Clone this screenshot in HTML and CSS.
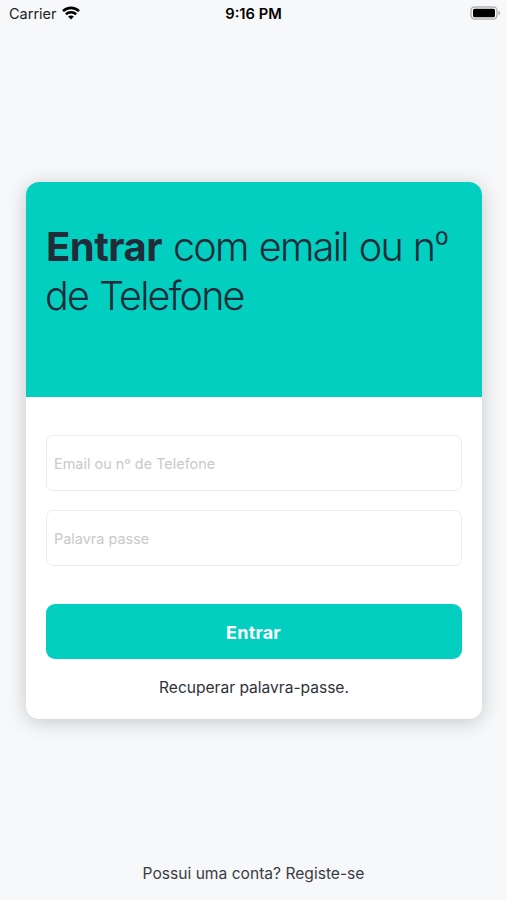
FILE: index.html
```html
<!DOCTYPE html>
<html lang="pt">
<head>
<meta charset="utf-8">
<title>Entrar</title>
<link rel="stylesheet" href="styles.css">
</head>
<body>
<div class="screen">
  <header class="status">
    <div class="carrier"><span class="carrier-name">Carrier</span>
      <svg class="wifi" viewBox="0 0 18 14" width="18" height="14"><g fill="none" stroke="#000" stroke-width="2.6"><path d="M1 5.100C5.500.800 12.500.800 17 5.100"/><path d="M3.900 8.300c2.800-2.700 7.400-2.700 10.200 0"/></g><path d="M9 13.400 6.100 10.500c1.500-1.400 4.300-1.400 5.800 0z"/></svg>
    </div>
    <div class="time">9:16 PM</div>
    <svg class="battery" viewBox="0 0 31 14" width="31" height="14"><rect x="1" y="1" width="26" height="12" rx="3.500" fill="#fff" stroke="#b5b5b6" stroke-width="1.500"/><rect x="3" y="2.800" width="22" height="8.400" rx="1.500"/><path d="M28.500 4.700c2.200.8 2.200 3.800 0 4.600z" fill="#b0b0b2"/></svg>
  </header>
  <main class="card">
    <div class="hero"><h1 class="title"><span class="line"><b class="strong">Entrar</b> <span class="rest">com email ou n<span class="ordinal">º</span></span></span><span class="line second">de Telefone</span></h1></div>
    <form class="form">
      <div class="field"><span class="hint">Email ou nº de Telefone</span></div>
      <div class="field"><span class="hint">Palavra passe</span></div>
      <button class="submit" type="button">Entrar</button>
      <a class="recover">Recuperar palavra-passe.</a>
    </form>
  </main>
  <footer class="register">Possui uma conta? Registe-se</footer>
</div>
</body>
</html>
```
FILE: styles.css
```css
* { box-sizing: border-box; }
body { margin: 0; font-family: Inter, "Liberation Sans", sans-serif; background: #f7f8fa; color: #222b38; }
.screen { height: 900px; display: flex; flex-direction: column; }
.status { height: 27px; display: grid; grid-template-columns: 1fr auto 1fr; align-items: center; padding: 0 6px; color: #000; font-size: 14.500px; }
.carrier { display: flex; align-items: center; gap: 5px; padding: 0 0 1px 3px; color: #222; }
.time { font-weight: 600; font-size: 14.700px; }
.battery { justify-self: end; margin-bottom: 1px; }
.card { margin: 155px 25px 0 26px; height: 537px; border-radius: 13px; background: #fff; overflow: hidden; box-shadow: 0 3px 20px rgba(0,0,0,.2); }
.hero { height: 215px; background: #02cfc0; padding: 40px 19px; }
.title { margin: 0; font-weight: 275; font-size: 39.500px; line-height: 49px; letter-spacing: -1.650px; word-spacing: 1.300px; }
.line { display: block; white-space: nowrap; }
.second { letter-spacing: -1.800px; word-spacing: 1.500px; }
.strong { margin-left: 1px; font-weight: 700; font-size: 40px; letter-spacing: -.5px; }
.ordinal { font-size: 34px; line-height: 0; vertical-align: 5px; }
.form { padding: 38px 20px 0; display: flex; flex-direction: column; }
.field { height: 56px; margin-bottom: 19px; padding: 0 8px; border: 1px solid #ebebed; border-radius: 7px; display: flex; align-items: center; }
.hint { color: #c9c9cb; font-size: 14.450px; margin-left: -1px; }
.submit { height: 55px; margin-top: 19px; border: 0; border-radius: 9px; background: #02cfc0; color: #fff; font: 700 18px Inter, sans-serif; letter-spacing: .2px; padding: 1px 1px 0 0; }
.recover { align-self: center; margin-top: 19px; font-size: 15.550px; line-height: 20px; color: #30323a; }
.register { margin-top: auto; height: 36px; text-align: center; font-size: 15.600px; line-height: 20px; color: #3a3c43; }
```
